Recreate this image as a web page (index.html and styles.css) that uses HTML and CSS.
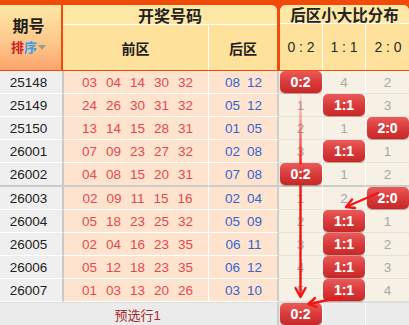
FILE: index.html
```html
<!DOCTYPE html>
<html>
<head>
<meta charset="utf-8">
<link rel="stylesheet" href="styles.css">
</head>
<body>
<div class="board">
  <div class="head">
    <div class="h-issue">
      <div class="h-issue-title">期号</div>
      <div class="h-sort"><span class="s-red">排</span><span class="s-blue">序</span><span class="caret"></span></div>
    </div>
    <div class="h-draw">
      <div class="h-title">开奖号码</div>
      <div class="h-sub2"><span class="hs-front">前区</span><span class="hs-back">后区</span></div>
    </div>
    <div class="h-dist">
      <div class="h-title">后区小大比分布</div>
      <div class="h-sub3"><span>0 : 2</span><span>1 : 1</span><span>2 : 0</span></div>
    </div>
  </div>

  <div class="rows">
    <div class="row"><div class="issue">25148</div><div class="front"><span>03</span><span>04</span><span>14</span><span>30</span><span>32</span></div><div class="back"><span>08</span><span>12</span></div><div class="d"><span class="badge">0:2</span></div><div class="d">4</div><div class="d">2</div></div>
    <div class="row"><div class="issue">25149</div><div class="front"><span>24</span><span>26</span><span>30</span><span>31</span><span>32</span></div><div class="back"><span>05</span><span>12</span></div><div class="d">1</div><div class="d"><span class="badge">1:1</span></div><div class="d">3</div></div>
    <div class="row"><div class="issue">25150</div><div class="front"><span>13</span><span>14</span><span>15</span><span>28</span><span>31</span></div><div class="back"><span>01</span><span>05</span></div><div class="d">2</div><div class="d">1</div><div class="d"><span class="badge">2:0</span></div></div>
    <div class="row"><div class="issue">26001</div><div class="front"><span>07</span><span>09</span><span>23</span><span>27</span><span>32</span></div><div class="back"><span>02</span><span>08</span></div><div class="d">3</div><div class="d"><span class="badge">1:1</span></div><div class="d">1</div></div>
    <div class="row sep"><div class="issue">26002</div><div class="front"><span>04</span><span>08</span><span>15</span><span>20</span><span>31</span></div><div class="back"><span>07</span><span>08</span></div><div class="d"><span class="badge">0:2</span></div><div class="d">1</div><div class="d">2</div></div>
    <div class="row"><div class="issue">26003</div><div class="front"><span>02</span><span>09</span><span>11</span><span>15</span><span>16</span></div><div class="back"><span>02</span><span>04</span></div><div class="d">1</div><div class="d">2</div><div class="d"><span class="badge">2:0</span></div></div>
    <div class="row"><div class="issue">26004</div><div class="front"><span>05</span><span>18</span><span>23</span><span>25</span><span>32</span></div><div class="back"><span>05</span><span>09</span></div><div class="d">2</div><div class="d"><span class="badge">1:1</span></div><div class="d">1</div></div>
    <div class="row"><div class="issue">26005</div><div class="front"><span>02</span><span>04</span><span>16</span><span>23</span><span>35</span></div><div class="back"><span>06</span><span>11</span></div><div class="d">3</div><div class="d"><span class="badge">1:1</span></div><div class="d">2</div></div>
    <div class="row"><div class="issue">26006</div><div class="front"><span>05</span><span>12</span><span>18</span><span>23</span><span>35</span></div><div class="back"><span>06</span><span>12</span></div><div class="d">4</div><div class="d"><span class="badge">1:1</span></div><div class="d">3</div></div>
    <div class="row"><div class="issue">26007</div><div class="front"><span>01</span><span>03</span><span>13</span><span>20</span><span>26</span></div><div class="back"><span>03</span><span>10</span></div><div class="d">5</div><div class="d"><span class="badge">1:1</span></div><div class="d">4</div></div>
  </div>

  <div class="foot">
    <div class="f-label">预选行1</div>
    <div class="fd"><span class="badge">0:2</span></div>
    <div class="fd"></div>
    <div class="fd"></div>
  </div>

  <svg class="lines" width="409" height="325" viewBox="0 0 409 325">
    <defs>
      <linearGradient id="fade" x1="0" y1="0" x2="0" y2="1">
        <stop offset="0" stop-color="#ff3030" stop-opacity="0.08"/>
        <stop offset="1" stop-color="#ff1010" stop-opacity="1"/>
      </linearGradient>
    </defs>
    <rect x="299.3" y="94" width="2.4" height="70" fill="url(#fade)"/>
    <g stroke="#f41414" stroke-width="2.4" fill="none" stroke-linecap="round" stroke-linejoin="round">
      <line x1="300.5" y1="186" x2="300.5" y2="296"/>
      <polyline points="295.5,288 300.5,297 305.5,288"/>
      <line x1="378" y1="193" x2="347" y2="206.5"/>
      <polyline points="352,199.5 346,207 355,208"/>
      <line x1="342" y1="297" x2="309" y2="304"/>
      <polyline points="315,298 308.5,304 316.5,306.8"/>
    </g>
  </svg>
</div>
</body>
</html>
```

FILE: styles.css
```css
* { box-sizing: border-box; }

html, body {
  margin: 0;
  padding: 0;
  background: #ffffff;
}

body {
  font-family: "Liberation Sans", "Noto Sans CJK SC", sans-serif;
  width: 409px;
  height: 325px;
  overflow: hidden;
}

.board {
  position: relative;
  width: 409px;
  height: 325px;
}

/* ---------- header ---------- */
.head {
  display: grid;
  grid-template-columns: 61px 214px 130px;
  column-gap: 2px;
  height: 71px;
  padding-top: 5px;
  padding-bottom: 1px;
  background: #f24a08;
}

.h-issue {
  display: flex;
  flex-direction: column;
  align-items: center;
  justify-content: center;
  padding-right: 4px;
  padding-bottom: 2px;
  background: linear-gradient(#fee7a6, #fdc68a 60%, #fda46c);
}

.h-issue-title {
  font-size: 16px;
  font-weight: bold;
  color: #1e1e1e;
  line-height: 20px;
}

.h-sort {
  display: flex;
  align-items: center;
  font-size: 13px;
  font-weight: bold;
  line-height: 17px;
  margin-top: 2px;
}

.s-red { color: #d3201e; }
.s-blue { color: #36a0ee; }

.caret {
  display: inline-block;
  width: 0;
  height: 0;
  margin-left: 1px;
  border-left: 4px solid transparent;
  border-right: 4px solid transparent;
  border-top: 5px solid #9a9a9a;
}

.h-draw {
  display: flex;
  flex-direction: column;
  border-top-right-radius: 6px;
  overflow: hidden;
  background: #fff;
}

.h-dist {
  display: flex;
  flex-direction: column;
  margin-left: 1px;
  border-top-left-radius: 6px;
  border-top-right-radius: 6px;
  overflow: hidden;
  background: #fff;
}

.h-title {
  height: 20px;
  flex: none;
  display: flex;
  align-items: center;
  justify-content: center;
  background: #fee8a6;
  font-size: 16px;
  font-weight: bold;
  color: #222;
  border-bottom: 1px solid #fff;
}

.h-dist .h-title {
  height: 19px;
  font-size: 15.5px;
}

.h-sub2 {
  flex: 1;
  display: grid;
  grid-template-columns: 146px 68px;
  column-gap: 0;
  background: #fee29b;
}

.h-sub2 span {
  display: flex;
  align-items: center;
  justify-content: center;
  font-size: 14px;
  font-weight: bold;
  color: #1e1e1e;
}

.hs-front { border-right: 1px solid #fff; }

.h-sub3 {
  flex: 1;
  display: grid;
  grid-template-columns: 42px 43px 45px;
  background: #fee29b;
}

.h-sub3 span {
  display: flex;
  align-items: center;
  justify-content: center;
  font-size: 14px;
  color: #2a2a2a;
  padding-bottom: 1px;
}

.h-sub3 span + span { border-left: 1px solid #fff; }

/* ---------- rows ---------- */
.row {
  display: grid;
  grid-template-columns: 64px 145px 70px 43px 43px 44px;
  height: 23px;
}

.row.sep { height: 24px; }

.row > div {
  display: flex;
  align-items: center;
  justify-content: center;
  font-size: 13.5px;
  border-bottom: 1px solid #fff;
}

.row.sep > div { border-bottom: 2px solid #cbcbcb; }

.issue {
  background: #efefef;
  color: #222;
  border-right: 2px solid #c9c9c9;
  padding-right: 5px;
}

.front {
  background: #fee4cf;
  color: #e8474b;
  gap: 9px;
  padding-left: 3px;
  border-right: 1px solid #fff;
}

.back {
  background: #fee4cf;
  color: #3663d2;
  gap: 7px;
  padding-left: 1px;
  border-right: 2px solid #cdcdcd;
}

.row > .d {
  background: #f6f0e5;
  color: #a8a8a8;
  border-bottom-color: #e6e1d8;
}

.row > .d + .d { border-left: 1px solid #fff; }

.badge {
  display: flex;
  align-items: center;
  justify-content: center;
  width: 42px;
  height: 22px;
  border-radius: 5px;
  background: linear-gradient(#ea5a5a, #d83838 55%, #c62828);
  color: #fff;
  font-size: 14px;
  font-weight: bold;
  box-shadow: 0 1px 1px rgba(120, 0, 0, 0.35);
  text-shadow: 0 0 1px rgba(255, 255, 255, 0.3);
}

/* ---------- footer ---------- */
.foot {
  display: grid;
  grid-template-columns: 279px 43px 43px 44px;
  height: 23px;
  border-top: 1px solid #dcdcdc;
  background: #ebebeb;
}

.f-label {
  display: flex;
  align-items: center;
  justify-content: center;
  font-size: 13px;
  color: #a82a2a;
  border-right: 2px solid #cdcdcd;
  padding-right: 2px;
}

.fd {
  display: flex;
  align-items: center;
  justify-content: center;
  background: #ececec;
}

.fd + .fd { border-left: 1px solid #fff; }

/* ---------- connector overlay ---------- */
.lines {
  position: absolute;
  top: 0;
  left: 0;
  pointer-events: none;
}
```
